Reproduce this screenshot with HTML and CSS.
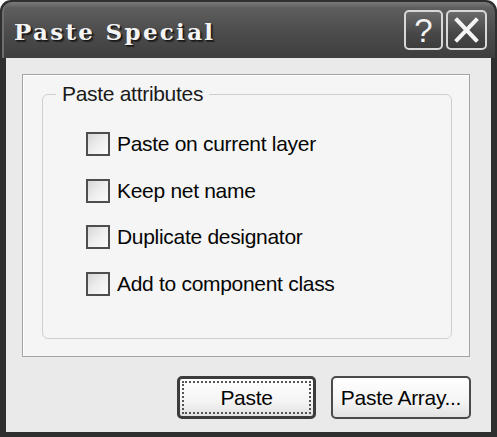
FILE: index.html
```html
<!DOCTYPE html>
<html>
<head>
<meta charset="utf-8">
<link rel="stylesheet" href="styles.css">
</head>
<body>
<div class="window">
  <div class="titlebar">
    <span class="title">Paste Special</span>
    <div class="tbtns">
      <span class="tbtn help">?</span>
      <span class="tbtn close">
        <svg width="41" height="40" viewBox="0 0 41 40"><path d="M11 10 L30 30 M30 10 L11 30" stroke="#f4f4f4" stroke-width="4" stroke-linecap="square" fill="none"/></svg>
      </span>
    </div>
  </div>
  <div class="client">
    <div class="panel">
      <fieldset class="group">
        <legend class="legend">Paste attributes</legend>
        <div class="options">
          <label class="opt"><span class="box"></span><span>Paste on current layer</span></label>
          <label class="opt"><span class="box"></span><span>Keep net name</span></label>
          <label class="opt"><span class="box"></span><span>Duplicate designator</span></label>
          <label class="opt"><span class="box"></span><span>Add to component class</span></label>
        </div>
      </fieldset>
    </div>
    <div class="actions">
      <button class="btn default"><span class="focus">Paste</span></button>
      <button class="btn">Paste Array...</button>
    </div>
  </div>
</div>
</body>
</html>
```

FILE: styles.css
```css
html, body {
  margin: 0;
  padding: 0;
  background: #ffffff;
}
.window {
  width: 497px;
  height: 437px;
  background: #2f2f2f;
  border-radius: 11px 11px 0 0;
  display: flex;
  flex-direction: column;
  box-sizing: border-box;
  overflow: hidden;
  font-family: "Liberation Sans", Arial, sans-serif;
}
.titlebar {
  height: 56px;
  flex: none;
  box-sizing: border-box;
  margin: 2px 2px 0 2px;
  border-radius: 10px 10px 0 0;
  background: linear-gradient(#7a7a7a 0px, #5e5e5e 6px, #4c4c4c 30px, #3e3e3e 56px);
  border-left: 2px solid #6e6e6e;
  display: flex;
  align-items: flex-start;
  justify-content: space-between;
  padding: 0 8px 0 10px;
}
.title {
  font-family: "DejaVu Serif", "Liberation Serif", serif;
  font-weight: bold;
  font-size: 23px;
  letter-spacing: 2.3px;
  color: #f4f4f4;
  text-shadow: 1px 1px 0 #1a1a1a, 2px 2px 1px #222;
  margin-top: 16px;
}
.tbtns {
  display: flex;
  gap: 3px;
  margin-top: 8px;
}
.tbtn {
  display: flex;
  align-items: center;
  justify-content: center;
  box-sizing: border-box;
  height: 40px;
  border: 2px solid #d8d8d8;
  border-radius: 5px;
  background: linear-gradient(#6a6a6a, #474747 60%, #3d3d3d);
  color: #f4f4f4;
}
.help {
  width: 39px;
  font-size: 33px;
  font-family: "Liberation Sans", Arial, sans-serif;
  line-height: 1;
}
.close {
  width: 41px;
}
.close svg {
  display: block;
  margin: -2px;
}
.client {
  flex: 1;
  margin: 0 6px 5px 6px;
  background: #eaeaea;
  padding: 16px 21px 0 16px;
  display: flex;
  flex-direction: column;
}
.panel {
  width: 448px;
  height: 283px;
  box-sizing: border-box;
  border: 1px solid #a4a4a4;
  box-shadow: inset 1px 1px 0 #ffffff;
  background: #f5f5f5;
  padding: 7px 0 0 19px;
}
.group {
  margin: 0;
  padding: 0;
  width: 410px;
  height: 257px;
  box-sizing: border-box;
  border: 1px solid #cfcfcf;
  border-radius: 6px;
  min-inline-size: 0;
}
.legend {
  margin-left: 13px;
  padding: 0 6px;
  font-size: 21px;
  line-height: 24px;
  letter-spacing: -0.3px;
  color: #1a1a1a;
}
.options {
  display: flex;
  flex-direction: column;
  gap: 22.5px;
  margin: 26px 0 0 43px;
}
.opt {
  display: flex;
  align-items: center;
  height: 24px;
  gap: 7px;
  font-size: 21px;
  letter-spacing: -0.3px;
  color: #050505;
}
.box {
  width: 24px;
  height: 24px;
  box-sizing: border-box;
  border: 2px solid #4e4e4e;
  background: linear-gradient(135deg, #d6d6d6, #eeeeee 50%, #fbfbfb);
  flex: none;
}
.actions {
  display: flex;
  justify-content: flex-end;
  gap: 15px;
  margin-top: 19px;
  margin-right: -1px;
}
.btn {
  width: 140px;
  height: 43px;
  box-sizing: border-box;
  border: 2px solid #4a4a4a;
  border-radius: 5px;
  background: linear-gradient(#ffffff, #f4f4f4 60%, #e2e2e2);
  font-family: "Liberation Sans", Arial, sans-serif;
  font-size: 21px;
  letter-spacing: -0.3px;
  color: #050505;
  padding: 0;
  display: flex;
  align-items: center;
  justify-content: center;
}
.default {
  width: 139px;
  border: 3px solid #3c3c3c;
  padding: 2px;
}
.focus {
  flex: 1;
  align-self: stretch;
  display: flex;
  align-items: center;
  justify-content: center;
  border: 2px dotted #555;
}
```
